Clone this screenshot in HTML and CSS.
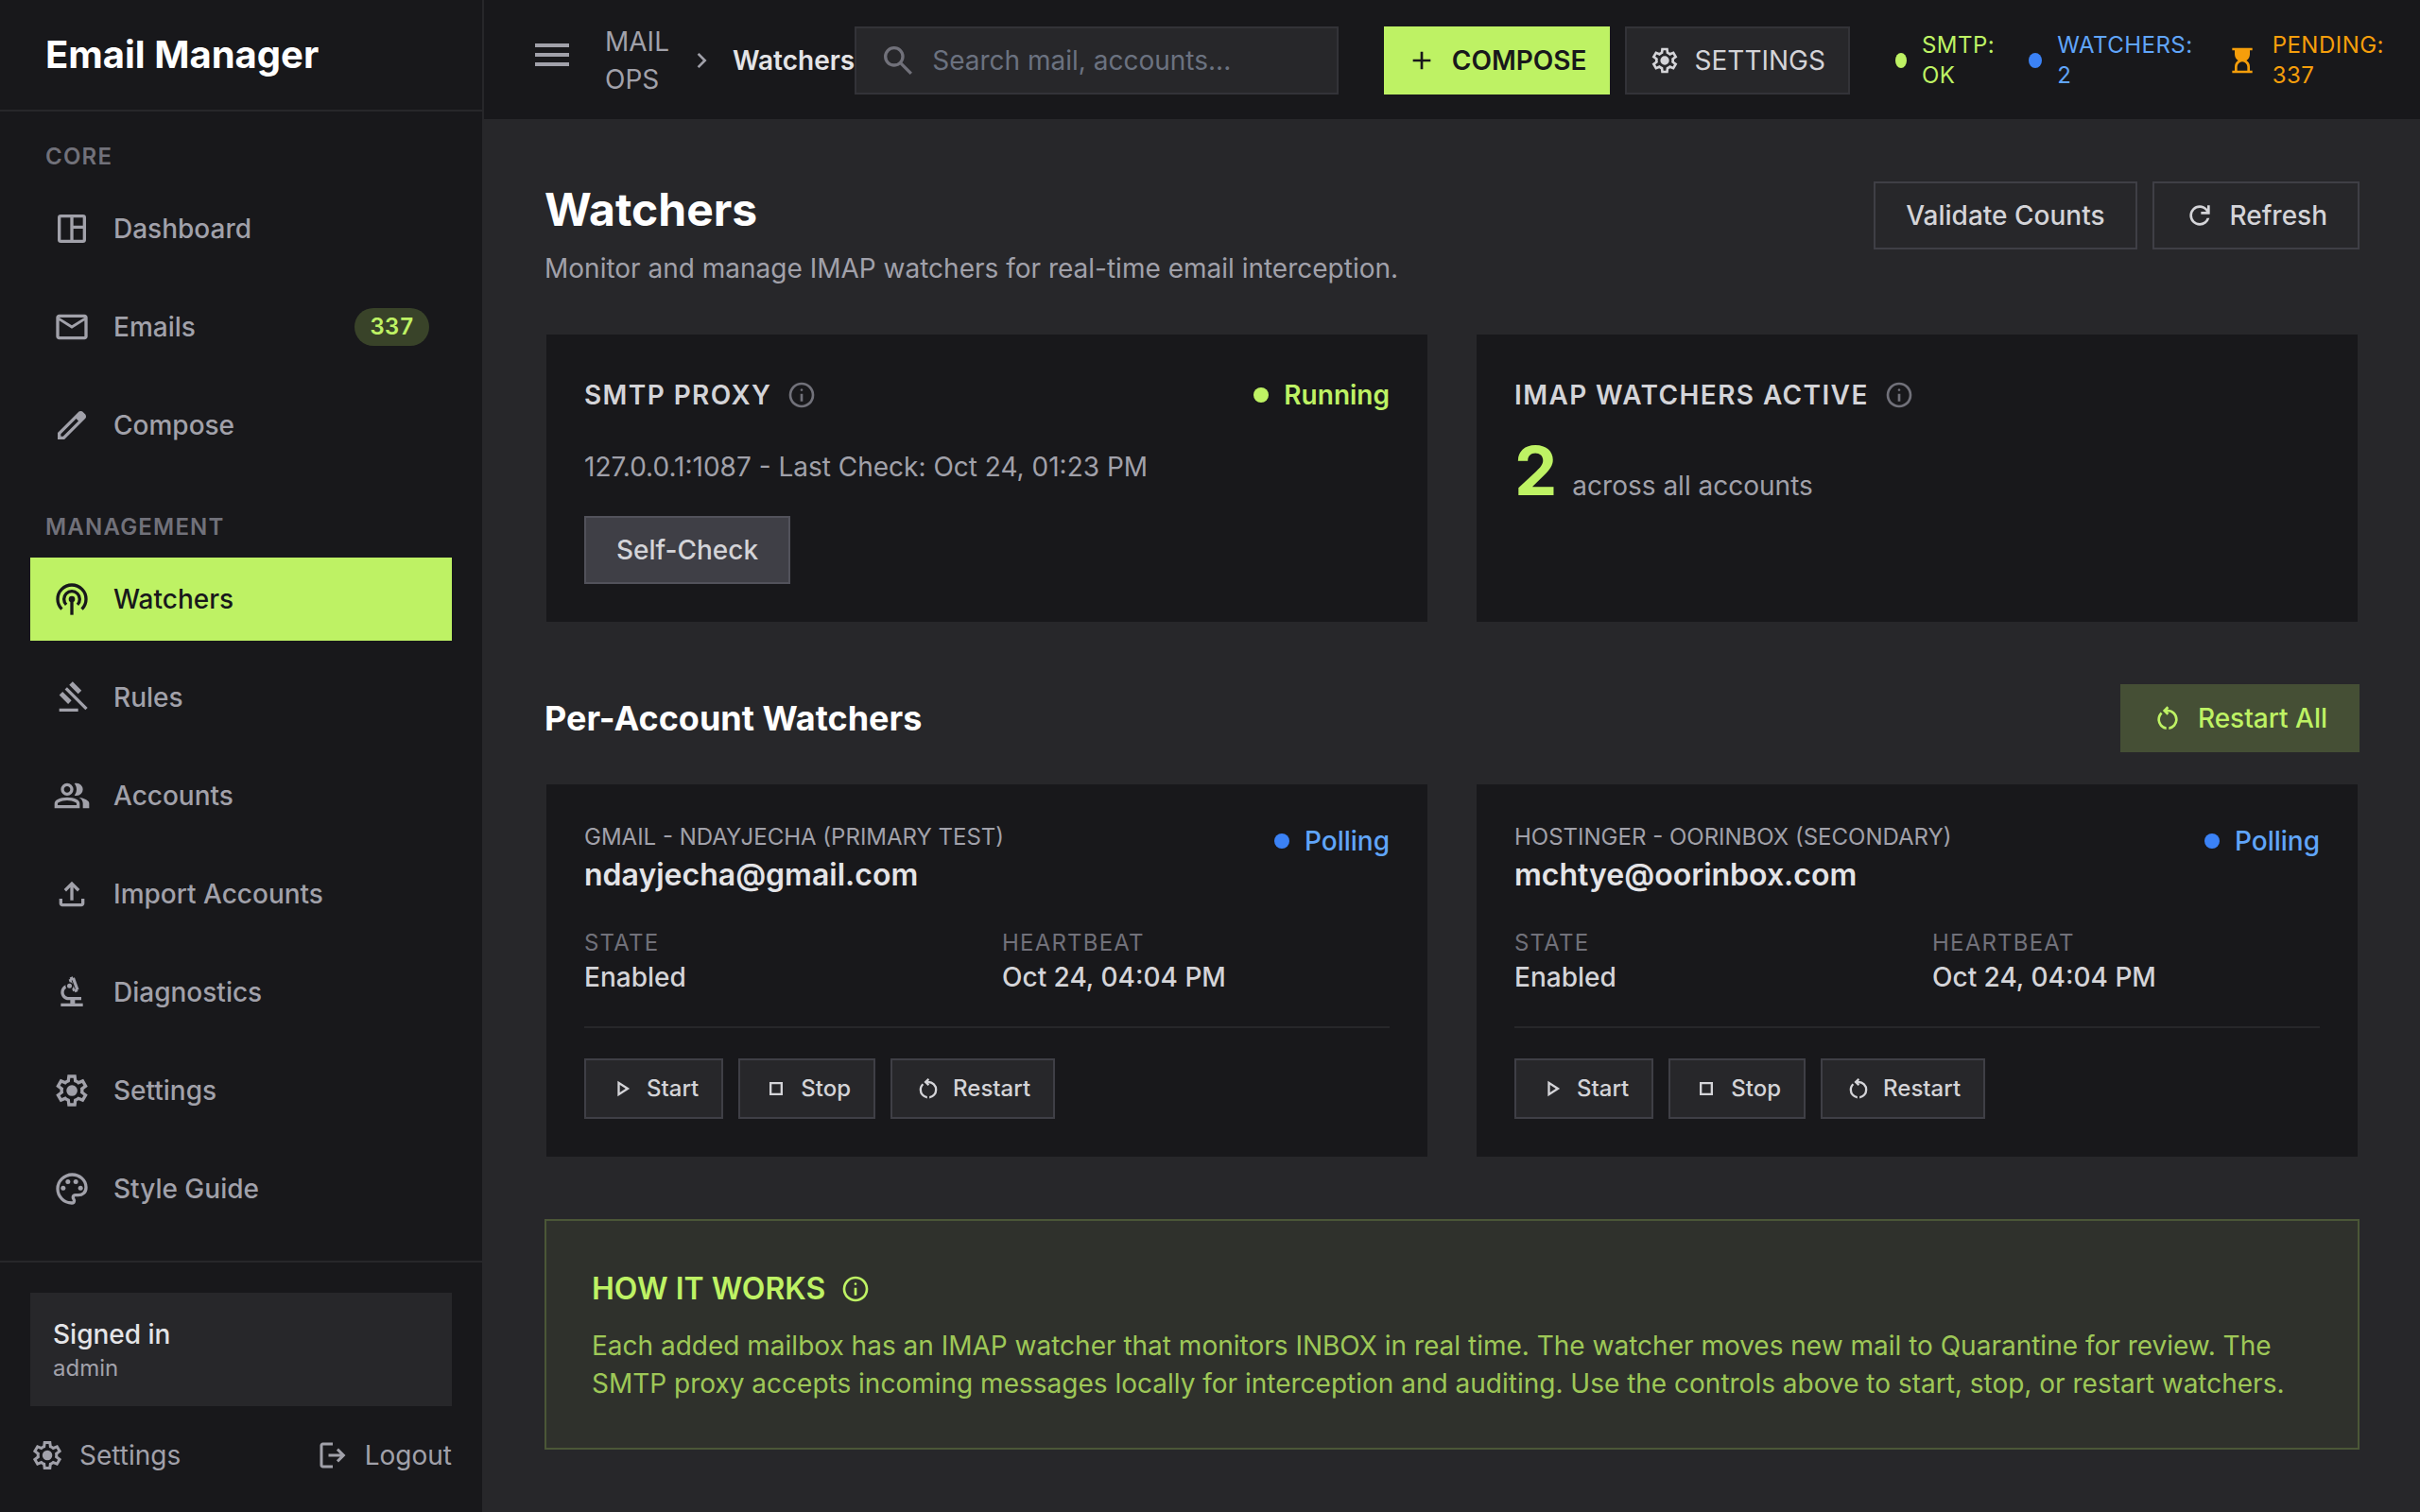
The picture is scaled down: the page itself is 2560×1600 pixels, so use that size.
FILE: index.html
```html
<!DOCTYPE html>
<html lang="en">
<head>
<meta charset="utf-8">
<meta name="viewport" content="width=device-width, initial-scale=1">
<title>Watchers - Email Manager</title>
<link rel="stylesheet" href="styles.css">
</head>
<body>
<svg class="sprite" aria-hidden="true">
  <symbol id="i-dashboard" viewBox="0 0 24 24"><path fill-rule="evenodd" d="M5 3h14a2 2 0 0 1 2 2v14a2 2 0 0 1-2 2H5a2 2 0 0 1-2-2V5a2 2 0 0 1 2-2Zm0 2v14h6V5H5Zm8 0v5h6V5h-6Zm0 7v7h6v-7h-6Z"/></symbol>
  <symbol id="i-mail" viewBox="0 -960 960 960"><path d="M160-160q-33 0-56.500-23.500T80-240v-480q0-33 23.500-56.500T160-800h640q33 0 56.500 23.500T880-720v480q0 33-23.500 56.500T800-160H160Zm320-280L160-640v400h640v-400L480-440Zm0-80 320-200H160l320 200Z"/></symbol>
  <symbol id="i-edit" viewBox="0 -960 960 960"><path d="M200-200h57l391-391-57-57-391 391v57Zm-80 80v-170l528-527q12-11 26.500-17t30.500-6q16 0 31 6t26 18l55 56q12 11 17.500 26t5.500 30q0 16-5.500 30.500T817-647L290-120H120Z"/></symbol>
  <symbol id="i-podcasts" viewBox="0 0 24 24"><g fill="none" stroke="currentColor" stroke-width="2"><path d="M5.640 18.360A9 9 0 1 1 18.360 18.360"/><path d="M8.460 15.540A5 5 0 1 1 15.540 15.540"/><path d="M12 12v10"/></g><circle cx="12" cy="12" r="2"/></symbol>
  <symbol id="i-gavel" viewBox="0 -960 960 960"><path d="M160-120v-80h480v80H160Zm226-194L160-540l84-86 228 226-86 86Zm254-254L414-796l86-84 226 226-86 86Zm184 408L302-682l56-56 522 522-56 56Z"/></symbol>
  <symbol id="i-group" viewBox="0 -960 960 960"><path d="M40-160v-112q0-34 17.500-62.500T104-378q62-31 126-46.500T360-440q66 0 130 15.500T616-378q29 15 46.500 43.500T680-272v112H40Zm720 0v-120q0-44-24.500-84.500T666-434q51 6 96 20.500t84 35.500q36 20 55 44.500t19 53.500v120H760ZM360-480q-66 0-113-47t-47-113q0-66 47-113t113-47q66 0 113 47t47 113q0 66-47 113t-113 47Zm400-160q0 66-47 113t-113 47q-11 0-28-2.500t-28-5.500q27-32 41.500-71t14.500-81q0-42-14.500-81T544-792q14-5 28-6.500t28-1.500q66 0 113 47t47 113ZM120-240h480v-32q0-11-5.500-20T580-306q-54-27-109-40.500T360-360q-56 0-111 13.500T140-306q-9 5-14.500 14t-5.500 20v32Zm240-320q33 0 56.500-23.500T440-640q0-33-23.500-56.500T360-720q-33 0-56.500 23.500T280-640q0 33 23.500 56.500T360-560Z"/></symbol>
  <symbol id="i-upload" viewBox="0 -960 960 960"><path d="M440-320v-326L336-542l-56-58 200-200 200 200-56 58-104-104v326h-80ZM240-160q-33 0-56.500-23.500T160-240v-120h80v120h480v-120h80v120q0 33-23.500 56.500T720-160H240Z"/></symbol>
  <symbol id="i-biotech" viewBox="0 0 24 24"><path d="M5 19h6v-2h-1c-2.760 0-5-2.240-5-5 0-2.080 1.280-3.870 3.090-4.620C8.040 7.580 8 7.790 8 8c0 .54.17 1.030.46 1.440C7.590 9.960 7 10.910 7 12c0 1.660 1.340 3 3 3h8v2h-4v2h5v2H5v-2Z"/><path fill-rule="evenodd" d="M10.560 5.510C11.910 5.540 13 6.640 13 8c0 .75-.33 1.410-.85 1.870l.59 1.620.94-.34.34.94 1.880-.68-.34-.94.94-.34L13.760 2.600l-.94.34L12.480 2l-1.880.68.34.94-.94.35.56 1.540ZM12.290 4.300l2.070 5.640-.5.180L11.800 4.480Z"/><circle cx="10.500" cy="8" r="1.500"/></symbol>
  <symbol id="i-settings" viewBox="0 -960 960 960"><path d="m370-80-16-128q-13-5-24.500-12T307-235l-119 50L78-375l103-78q-1-7-1-13.500v-27q0-6.500 1-13.500L78-585l110-190 119 50q11-8 23-15t24-12l16-128h220l16 128q13 5 24.500 12t22.500 15l119-50 110 190-103 78q1 7 1 13.500v27q0 6.500-2 13.500l103 78-110 190-118-50q-11 8-23 15t-24 12L590-80H370Zm70-80h79l14-106q31-8 57.500-23.500T639-327l99 41 39-68-86-65q5-14 7-29.500t2-31.500q0-16-2-31.500t-7-29.500l86-65-39-68-99 42q-22-23-48.500-38.500T533-694l-13-106h-79l-14 106q-31 8-57.500 23.500T321-633l-99-41-39 68 86 64q-5 15-7 30t-2 32q0 16 2 31t7 30l-86 65 39 68 99-42q22 23 48.500 38.500T427-266l13 106Zm42-180q58 0 99-41t41-99q0-58-41-99t-99-41q-59 0-99.500 41T342-480q0 58 40.500 99t99.500 41Z"/></symbol>
  <symbol id="i-palette" viewBox="0 -960 960 960"><path d="M480-80q-82 0-155-31.500t-127.500-86Q143-252 111.500-325T80-480q0-83 32.500-156t88-127Q256-817 330-848.500T488-880q80 0 151 27.500t124.500 76q53.500 48.500 85 115T880-518q0 115-70 176.500T640-280h-74q-9 0-12.500 5t-3.500 11q0 12 15 34.500t15 51.500q0 50-27.500 74T480-80Zm0-80q9 0 14.500-5t5.500-13q0-14-15-33t-15-57q0-42 29-67t71-25h70q66 0 113-38.500T800-518q0-121-92.500-201.500T488-800q-136 0-232 93t-96 227q0 133 93.500 226.500T480-160Z"/><circle cx="260" cy="-500" r="60"/><circle cx="380" cy="-660" r="60"/><circle cx="580" cy="-660" r="60"/><circle cx="700" cy="-500" r="60"/></symbol>
  <symbol id="i-logout" viewBox="0 -960 960 960"><path d="M200-120q-33 0-56.500-23.500T120-200v-560q0-33 23.500-56.500T200-840h280v80H200v560h280v80H200Zm440-160-55-58 102-102H360v-80h327L585-622l55-58 200 200-200 200Z"/></symbol>
  <symbol id="i-menu" viewBox="0 -960 960 960"><path d="M120-240v-80h720v80H120Zm0-200v-80h720v80H120Zm0-200v-80h720v80H120Z"/></symbol>
  <symbol id="i-chevron" viewBox="0 -960 960 960"><path d="M504-480 320-664l56-56 240 240-240 240-56-56 184-184Z"/></symbol>
  <symbol id="i-search" viewBox="0 -960 960 960"><path d="M784-120 532-372q-30 24-69 38t-83 14q-109 0-184.500-75.500T120-580q0-109 75.500-184.500T380-840q109 0 184.500 75.500T640-580q0 44-14 83t-38 69l252 252-56 56ZM380-400q75 0 127.500-52.500T560-580q0-75-52.500-127.500T380-760q-75 0-127.500 52.500T200-580q0 75 52.500 127.500T380-400Z"/></symbol>
  <symbol id="i-add" viewBox="0 -960 960 960"><path d="M440-440H200v-80h240v-240h80v240h240v80H520v240h-80v-240Z"/></symbol>
  <symbol id="i-hourglass" viewBox="0 -960 960 960"><path d="M320-160h320v-120q0-66-47-113t-113-47q-66 0-113 47t-47 113v120ZM160-80v-80h80v-120q0-61 28.500-114.500T348-480q-51-32-79.500-85.500T240-680v-120h-80v-80h640v80h-80v120q0 61-28.500 114.500T612-480q51 32 79.500 85.500T720-280v120h80v80H160Z"/></symbol>
  <symbol id="i-refresh" viewBox="0 -960 960 960"><path d="M480-160q-134 0-227-93t-93-227q0-134 93-227t227-93q69 0 132 28.500T720-690v-110h80v280H520v-80h168q-32-56-87.500-88T480-720q-100 0-170 70t-70 170q0 100 70 170t170 70q77 0 139-44t87-116h84q-28 106-114 173t-196 67Z"/></symbol>
  <symbol id="i-restart" viewBox="0 -960 960 960"><path d="M440-122q-121-15-200.500-105.500T160-440q0-66 26-126.500T260-672l57 57q-38 34-57.500 79T240-440q0 88 56 155.500T440-202v80Zm80 0v-80q87-16 143.500-83T720-440q0-100-70-170t-170-70h-3l44 44-56 56-140-140 140-140 56 56-44 44h3q134 0 227 93t93 227q0 121-79.500 211.500T520-122Z"/></symbol>
  <symbol id="i-info" viewBox="0 -960 960 960"><path d="M440-280h80v-240h-80v240Zm40-320q17 0 28.500-11.500T520-640q0-17-11.500-28.500T480-680q-17 0-28.500 11.500T440-640q0 17 11.500 28.500T480-600Zm0 520q-83 0-156-31.500T197-197q-54-54-85.500-127T80-480q0-83 31.500-156T197-763q54-54 127-85.500T480-880q83 0 156 31.500T763-763q54 54 85.500 127T880-480q0 83-31.500 156T763-197q-54 54-127 85.500T480-80Zm0-80q134 0 227-93t93-227q0-134-93-227t-227-93q-134 0-227 93t-93 227q0 134 93 227t227 93Z"/></symbol>
  <symbol id="i-play" viewBox="0 -960 960 960"><path d="M320-200v-560l440 280-440 280Zm80-146 210-134-210-134v268Z"/></symbol>
  <symbol id="i-stop" viewBox="0 -960 960 960"><path d="M320-640v320h320v-320H320Zm-80 400v-480h480v480H240Z"/></symbol>
</svg>

<div class="app">
  <aside class="sidebar">
    <div class="brand">Email Manager</div>
    <nav class="nav" aria-label="Main">
      <section class="nav-group">
        <h2 class="nav-label">CORE</h2>
        <ul class="nav-list">
          <li><a class="nav-item" href="#"><svg class="icon icon-40"><use href="#i-dashboard"/></svg>Dashboard</a></li>
          <li><a class="nav-item" href="#"><svg class="icon icon-40"><use href="#i-mail"/></svg>Emails<span class="badge">337</span></a></li>
          <li><a class="nav-item" href="#"><svg class="icon icon-40"><use href="#i-edit"/></svg>Compose</a></li>
        </ul>
      </section>
      <section class="nav-group">
        <h2 class="nav-label">MANAGEMENT</h2>
        <ul class="nav-list">
          <li><a class="nav-item is-active" href="#" aria-current="page"><svg class="icon icon-40"><use href="#i-podcasts"/></svg>Watchers</a></li>
          <li><a class="nav-item" href="#"><svg class="icon icon-40"><use href="#i-gavel"/></svg>Rules</a></li>
          <li><a class="nav-item" href="#"><svg class="icon icon-40"><use href="#i-group"/></svg>Accounts</a></li>
          <li><a class="nav-item" href="#"><svg class="icon icon-40"><use href="#i-upload"/></svg>Import Accounts</a></li>
          <li><a class="nav-item" href="#"><svg class="icon icon-40"><use href="#i-biotech"/></svg>Diagnostics</a></li>
          <li><a class="nav-item" href="#"><svg class="icon icon-40"><use href="#i-settings"/></svg>Settings</a></li>
          <li><a class="nav-item" href="#"><svg class="icon icon-40"><use href="#i-palette"/></svg>Style Guide</a></li>
        </ul>
      </section>
    </nav>
    <div class="side-foot">
      <div class="user">
        <div class="user-state">Signed in</div>
        <div class="user-name">admin</div>
      </div>
      <div class="side-links">
        <a class="side-link" href="#"><svg class="icon icon-36"><use href="#i-settings"/></svg>Settings</a>
        <a class="side-link" href="#"><svg class="icon icon-36"><use href="#i-logout"/></svg>Logout</a>
      </div>
    </div>
  </aside>

  <div class="page">
    <header class="topbar">
      <button class="menu-btn" type="button" aria-label="Toggle menu"><svg class="icon icon-48"><use href="#i-menu"/></svg></button>
      <nav class="crumbs" aria-label="Breadcrumb">
        <a class="crumb" href="#">MAIL OPS</a>
        <svg class="icon icon-32"><use href="#i-chevron"/></svg>
        <span class="crumb-current">Watchers</span>
      </nav>
      <label class="search">
        <svg class="icon icon-40"><use href="#i-search"/></svg>
        <input class="search-input" type="search" placeholder="Search mail, accounts..." aria-label="Search mail, accounts">
      </label>
      <div class="top-actions">
        <button class="btn btn-primary" type="button"><svg class="icon icon-32"><use href="#i-add"/></svg>COMPOSE</button>
        <button class="btn btn-tool" type="button"><svg class="icon icon-32"><use href="#i-settings"/></svg>SETTINGS</button>
      </div>
      <div class="health">
        <div class="health-item is-ok"><span class="dot dot-smtp"></span><span>SMTP: OK</span></div>
        <div class="health-item is-info"><span class="dot dot-watch"></span><span>WATCHERS: 2</span></div>
        <div class="health-item is-warn"><svg class="icon icon-32"><use href="#i-hourglass"/></svg><span>PENDING: 337</span></div>
      </div>
    </header>

    <main class="main">
      <div class="page-head">
        <div>
          <h1 class="title">Watchers</h1>
          <p class="subtitle">Monitor and manage IMAP watchers for real-time email interception.</p>
        </div>
        <div class="actions">
          <button class="btn btn-outline" type="button">Validate Counts</button>
          <button class="btn btn-outline" type="button"><svg class="icon icon-32"><use href="#i-refresh"/></svg>Refresh</button>
        </div>
      </div>

      <div class="cards">
        <section class="card">
          <div class="card-head">
            <h2 class="card-title">SMTP PROXY</h2>
            <svg class="icon icon-32 muted"><use href="#i-info"/></svg>
            <span class="status status-strong is-ok"><span class="dot"></span>Running</span>
          </div>
          <p class="proxy-line">127.0.0.1:1087 - Last Check: Oct 24, 01:23 PM</p>
          <button class="btn btn-solid" type="button">Self-Check</button>
        </section>
        <section class="card">
          <div class="card-head">
            <h2 class="card-title">IMAP WATCHERS ACTIVE</h2>
            <svg class="icon icon-32 muted"><use href="#i-info"/></svg>
          </div>
          <p class="count"><strong class="count-num">2</strong><span>across all accounts</span></p>
        </section>
      </div>

      <div class="section-head">
        <h2 class="section-title">Per-Account Watchers</h2>
        <button class="btn btn-tint" type="button"><svg class="icon icon-32"><use href="#i-restart"/></svg>Restart All</button>
      </div>

      <div class="cards">
        <article class="card">
          <div class="account-head">
            <div>
              <div class="account-name">GMAIL - NDAYJECHA (PRIMARY TEST)</div>
              <h3 class="account-mail">ndayjecha@gmail.com</h3>
            </div>
            <span class="status is-info"><span class="dot"></span>Polling</span>
          </div>
          <dl class="facts">
            <div><dt>STATE</dt><dd>Enabled</dd></div>
            <div><dt>HEARTBEAT</dt><dd>Oct 24, 04:04 PM</dd></div>
          </dl>
          <div class="controls">
            <button class="btn btn-small" type="button"><svg class="icon icon-28"><use href="#i-play"/></svg>Start</button>
            <button class="btn btn-small" type="button"><svg class="icon icon-28"><use href="#i-stop"/></svg>Stop</button>
            <button class="btn btn-small" type="button"><svg class="icon icon-28"><use href="#i-restart"/></svg>Restart</button>
          </div>
        </article>
        <article class="card">
          <div class="account-head">
            <div>
              <div class="account-name">HOSTINGER - OORINBOX (SECONDARY)</div>
              <h3 class="account-mail">mchtye@oorinbox.com</h3>
            </div>
            <span class="status is-info"><span class="dot"></span>Polling</span>
          </div>
          <dl class="facts">
            <div><dt>STATE</dt><dd>Enabled</dd></div>
            <div><dt>HEARTBEAT</dt><dd>Oct 24, 04:04 PM</dd></div>
          </dl>
          <div class="controls">
            <button class="btn btn-small" type="button"><svg class="icon icon-28"><use href="#i-play"/></svg>Start</button>
            <button class="btn btn-small" type="button"><svg class="icon icon-28"><use href="#i-stop"/></svg>Stop</button>
            <button class="btn btn-small" type="button"><svg class="icon icon-28"><use href="#i-restart"/></svg>Restart</button>
          </div>
        </article>
      </div>

      <section class="help">
        <h2 class="help-title">HOW IT WORKS<svg class="icon icon-32"><use href="#i-info"/></svg></h2>
        <p class="help-text">Each added mailbox has an IMAP watcher that monitors INBOX in real time. The watcher moves new mail to Quarantine for review. The SMTP proxy accepts incoming messages locally for interception and auditing. Use the controls above to start, stop, or restart watchers.</p>
      </section>
    </main>
  </div>
</div>
</body>
</html>
```
FILE: styles.css
```css
:root {
  --ink: #18181b;
  --surface: #27272a;
  --line: #3f3f46;
  --muted: #71717a;
  --soft: #a1a1aa;
  --text: #d4d4d8;
  --bright: #e4e4e7;
  --lime: #bef264;
  --blue: #60a5fa;
  --lime-tint: rgba(190, 242, 100, 0.2);
}

* {
  box-sizing: border-box;
}

body {
  margin: 0;
  background: var(--surface);
  color: var(--text);
  font-family: Inter, "Liberation Sans", sans-serif;
  font-size: 28px;
  line-height: 40px;
}

h1, h2, h3, p, ul, dl, dd {
  margin: 0;
  padding: 0;
}

a {
  color: inherit;
  text-decoration: none;
}

button, input {
  font: inherit;
  color: inherit;
}

.sprite {
  display: none;
}

.icon {
  display: block;
  flex: none;
  fill: currentColor;
}

.icon-28 { width: 28px; height: 28px; }
.icon-32 { width: 32px; height: 32px; }
.icon-36 { width: 36px; height: 36px; }
.icon-40 { width: 40px; height: 40px; }
.icon-48 { width: 48px; height: 48px; }

.muted { color: var(--muted); }

.app {
  display: flex;
  min-height: 100vh;
}

/* Sidebar */
.sidebar {
  display: flex;
  flex: none;
  flex-direction: column;
  width: 512px;
  border-right: 2px solid var(--surface);
  background: var(--ink);
}

.brand {
  padding: 32px 48px;
  border-bottom: 2px solid var(--surface);
  color: #fff;
  font-size: 40px;
  font-weight: 700;
  line-height: 52px;
}

.nav {
  display: flex;
  flex-direction: column;
  gap: 48px;
  padding: 32px;
}

.nav-label {
  margin-bottom: 16px;
  padding: 0 16px;
  color: var(--muted);
  font-size: 24px;
  font-weight: 600;
  letter-spacing: 0.05em;
  line-height: 32px;
}

.nav-list {
  display: flex;
  flex-direction: column;
  gap: 16px;
  list-style: none;
}

.nav-item {
  display: flex;
  align-items: center;
  gap: 24px;
  height: 88px;
  padding: 0 24px;
  color: var(--soft);
  font-weight: 500;
}

.nav-item.is-active {
  background: var(--lime);
  color: var(--ink);
}

.badge {
  margin-left: auto;
  padding: 4px 16px;
  border-radius: 20px;
  background: var(--lime-tint);
  color: var(--lime);
  font-size: 24px;
  font-variant-numeric: tabular-nums;
  font-weight: 600;
  line-height: 32px;
}

.side-foot {
  display: flex;
  flex-direction: column;
  gap: 24px;
  margin-top: auto;
  padding: 32px;
  border-top: 2px solid var(--surface);
}

.user {
  padding: 24px;
  background: var(--surface);
}

.user-state {
  color: var(--bright);
  font-weight: 500;
}

.user-name {
  color: var(--soft);
  font-size: 24px;
  line-height: 32px;
}

.side-links {
  display: flex;
  justify-content: space-between;
  color: var(--soft);
}

.side-link {
  display: flex;
  align-items: center;
  gap: 16px;
  padding: 8px 0;
}

/* Top bar */
.page {
  flex: 1;
  min-width: 0;
}

.topbar {
  display: flex;
  align-items: center;
  height: 128px;
  padding: 2px 38px 0 48px;
  border-bottom: 2px solid var(--surface);
  background: var(--ink);
}

.menu-btn {
  padding: 0 0 12px;
  border: 0;
  background: none;
  color: var(--soft);
}

.crumbs {
  display: flex;
  align-items: center;
  gap: 16px;
  margin-left: 32px;
  color: var(--soft);
}

.crumb {
  width: 71px;
}

.crumb-current {
  color: var(--bright);
  font-weight: 600;
}

.search {
  display: flex;
  flex: 1;
  align-items: center;
  gap: 16px;
  height: 72px;
  min-width: 0;
  margin-right: 48px;
  padding: 0 24px;
  border: 2px solid #333338;
  background: var(--surface);
  color: var(--muted);
}

.search-input {
  flex: 1;
  min-width: 0;
  padding: 0;
  border: 0;
  outline: 0;
  background: none;
  color: var(--bright);
}

.search-input::placeholder {
  color: #6b7280;
  opacity: 1;
}

.top-actions, .actions {
  display: flex;
  flex: none;
  gap: 16px;
}

.btn {
  display: inline-flex;
  align-items: center;
  justify-content: center;
  gap: 16px;
  height: 72px;
  padding: 0 32px;
  border: 2px solid var(--line);
  border-radius: 0;
  background: none;
  color: var(--text);
  font-weight: 500;
  white-space: nowrap;
}

.btn-primary {
  padding: 0 24px;
  border: 0;
  background: var(--lime);
  color: var(--ink);
  font-weight: 600;
}

.btn-tool {
  padding: 0 24px;
  border-color: #333338;
  background: var(--surface);
  font-weight: 400;
}

.btn-solid {
  border-color: #52525b;
  background: var(--line);
}

.btn-tint {
  padding: 0 34px;
  border: 0;
  background: var(--lime-tint);
  color: var(--lime);
}

.btn-small {
  gap: 12px;
  height: 64px;
  padding: 0 24px;
  background: var(--surface);
  font-size: 24px;
  line-height: 32px;
}

.health {
  display: flex;
  flex: none;
  gap: 36px;
  margin-left: 48px;
  font-size: 24px;
  letter-spacing: 0.02em;
  line-height: 32px;
}

.health-item {
  display: flex;
  align-items: center;
  gap: 16px;
  width: min-content;
}

.dot {
  flex: none;
  width: 16px;
  height: 16px;
  border-radius: 50%;
  background: var(--lime);
}

.is-info .dot { background: #3b82f6; }
.dot-smtp { width: 12px; }
.dot-watch { width: 14px; }

.is-ok { color: var(--lime); }
.is-info { color: var(--blue); }
.is-warn { color: #f59e0b; }

/* Content */
.main {
  padding: 64px;
}

.page-head {
  display: flex;
  align-items: flex-start;
  justify-content: space-between;
  margin-bottom: 48px;
}

.title {
  margin-bottom: 12px;
  color: #fff;
  font-size: 48px;
  font-weight: 700;
  line-height: 60px;
}

.subtitle {
  color: var(--soft);
}

.cards {
  display: grid;
  grid-template-columns: 1fr 1fr;
  gap: 48px;
  margin-bottom: 64px;
}

.card {
  padding: 40px;
  border: 2px solid var(--surface);
  background: var(--ink);
}

.card-head {
  display: flex;
  align-items: center;
  gap: 16px;
  min-height: 48px;
}

.card-title {
  font-size: 28px;
  font-weight: 600;
  letter-spacing: 0.05em;
}

.status {
  display: flex;
  align-items: center;
  gap: 16px;
  margin-left: auto;
  font-weight: 500;
}

.status-strong {
  font-weight: 600;
}

.proxy-line {
  margin: 32px 0;
  color: var(--soft);
}

.count {
  display: flex;
  align-items: baseline;
  gap: 16px;
  margin-top: 16px;
  color: var(--soft);
}

.count-num {
  color: var(--lime);
  font-size: 72px;
  font-weight: 700;
  line-height: 80px;
}

.section-head {
  display: flex;
  align-items: center;
  justify-content: space-between;
  margin-bottom: 32px;
}

.section-title {
  color: #fff;
  font-size: 36px;
  font-weight: 700;
}

.account-head {
  display: flex;
  align-items: flex-start;
  justify-content: space-between;
}

.account-name {
  color: var(--soft);
  font-size: 24px;
  line-height: 32px;
}

.account-mail {
  color: var(--bright);
  font-size: 32px;
  font-weight: 600;
  line-height: 48px;
}

.facts {
  display: grid;
  grid-template-columns: 1fr 1fr;
  gap: 32px;
  margin: 32px 0;
}

.facts dt {
  color: var(--muted);
  font-size: 24px;
  letter-spacing: 0.05em;
  line-height: 32px;
}

.facts dd {
  font-weight: 500;
}

.controls {
  display: flex;
  gap: 16px;
  padding-top: 32px;
  border-top: 2px solid var(--surface);
}

.help {
  padding: 48px;
  border: 2px solid var(--lime-tint);
  background: rgba(190, 242, 100, 0.05);
}

.help-title {
  display: flex;
  align-items: center;
  gap: 16px;
  margin-bottom: 16px;
  color: var(--lime);
  font-size: 32px;
  font-weight: 600;
  line-height: 48px;
}

.help-text {
  color: rgba(190, 242, 100, 0.8);
}
```
